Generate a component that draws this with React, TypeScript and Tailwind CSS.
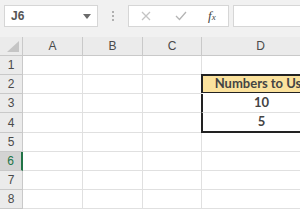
import React from "react";

const rowHeights = [19, 19, 19, 20, 19, 19, 19, 19];
const cols = ["A", "B", "C", "D"];
const cellFont = { fontFamily: 'Lato, "Liberation Sans", sans-serif' };

export default function App() {
  return (
    <div className="w-[300px] h-[210px] overflow-hidden bg-white" style={{ fontFamily: '"Liberation Sans", Arial, sans-serif' }}>
      {/* toolbar */}
      <div className="h-[37px] bg-[#f1f1f1] flex items-start pt-[5px] pl-[4px]">
        <div className="w-[94px] h-[22px] bg-white border border-[#d6d6d6] flex items-center pl-[6px] pr-[6px] justify-between">
          <span className="text-[12px] font-bold text-[#555]">J6</span>
          <svg width="8" height="5" viewBox="0 0 8 5"><path d="M0 0H8L4 5Z" fill="#6b6b6b" /></svg>
        </div>
        <div className="w-[30px] h-[22px] flex flex-col items-center justify-center gap-[2px]">
          <div className="w-[2px] h-[2px] bg-[#b0b0b0]" />
          <div className="w-[2px] h-[2px] bg-[#b0b0b0]" />
          <div className="w-[2px] h-[2px] bg-[#b0b0b0]" />
        </div>
        <div className="w-[101px] h-[22px] bg-white border border-[#d6d6d6] flex items-center">
          <svg className="ml-[12px]" width="10" height="10" viewBox="0 0 10 10"><path d="M1 1L9 9M9 1L1 9" stroke="#c4c4c4" strokeWidth="1.3" /></svg>
          <svg className="ml-[24px]" width="12" height="10" viewBox="0 0 12 10"><path d="M1 5L4.5 8.5L11 1" stroke="#b4b4b4" strokeWidth="1.3" fill="none" /></svg>
          <span className="ml-[21px] text-[13px] italic text-[#444]" style={{ fontFamily: '"Liberation Serif", serif' }}>f<span className="text-[9px]">x</span></span>
        </div>
        <div className="ml-[4px] flex-1 h-[22px] bg-white border border-[#d6d6d6] border-r-0" />
      </div>
      {/* grid */}
      <div className="grid grid-cols-[23px_60px_60px_59px_118px]">
        <div className="h-[19px] bg-[#ebebeb] border-r border-b border-[#c9c9c9] flex items-end justify-end pr-[3px] pb-[3px]">
          <svg width="12" height="11" viewBox="0 0 12 11"><path d="M12 0V11H0Z" fill="#c5c5c5" /></svg>
        </div>
        {cols.map((c) => (
          <div key={c} className="h-[19px] bg-[#ebebeb] border-r border-b border-[#c9c9c9] flex items-center justify-center text-[12px] text-[#4a4a4a]">
            {c}
          </div>
        ))}
        {rowHeights.map((h, i) => {
          const r = i + 1;
          const active = r === 6;
          return (
            <React.Fragment key={r}>
              <div
                style={{ height: h }}
                className={
                  active
                    ? "bg-[#d3d3d3] border-r-2 border-r-[#217346] border-b border-b-[#c9c9c9] flex items-center justify-center text-[12px] text-[#217346]"
                    : "bg-[#ebebeb] border-r border-b border-[#c9c9c9] flex items-center justify-center text-[12px] text-[#4a4a4a]"
                }
              >
                {r}
              </div>
              <div style={{ height: h }} className="border-r border-b border-[#e0e0e0]" />
              <div style={{ height: h }} className="border-r border-b border-[#e0e0e0]" />
              <div style={{ height: h }} className={r >= 2 && r <= 4 ? "border-b border-[#e0e0e0]" : "border-r border-b border-[#e0e0e0]"} />
              {r === 2 ? (
                <div style={{ height: h, ...cellFont }} className="bg-[#fbe29d] border-l-2 border-t-2 border-b border-[#222] -mt-[1px] -ml-[1px] flex items-center justify-center text-[13px] font-bold text-[#444] whitespace-nowrap">
                  Numbers to Use
                </div>
              ) : r === 3 ? (
                <div style={{ height: h, ...cellFont }} className="border-l-2 border-b border-l-[#222] border-b-[#e0e0e0] -ml-[1px] flex items-center justify-center text-[13px] font-bold text-[#444]">
                  10
                </div>
              ) : r === 4 ? (
                <div style={{ height: h, ...cellFont }} className="border-l-2 border-b-2 border-[#222] -ml-[1px] flex items-center justify-center text-[13px] font-bold text-[#444]">
                  5
                </div>
              ) : (
                <div style={{ height: h }} className="border-r border-b border-[#e0e0e0]" />
              )}
            </React.Fragment>
          );
        })}
      </div>
    </div>
  );
}
